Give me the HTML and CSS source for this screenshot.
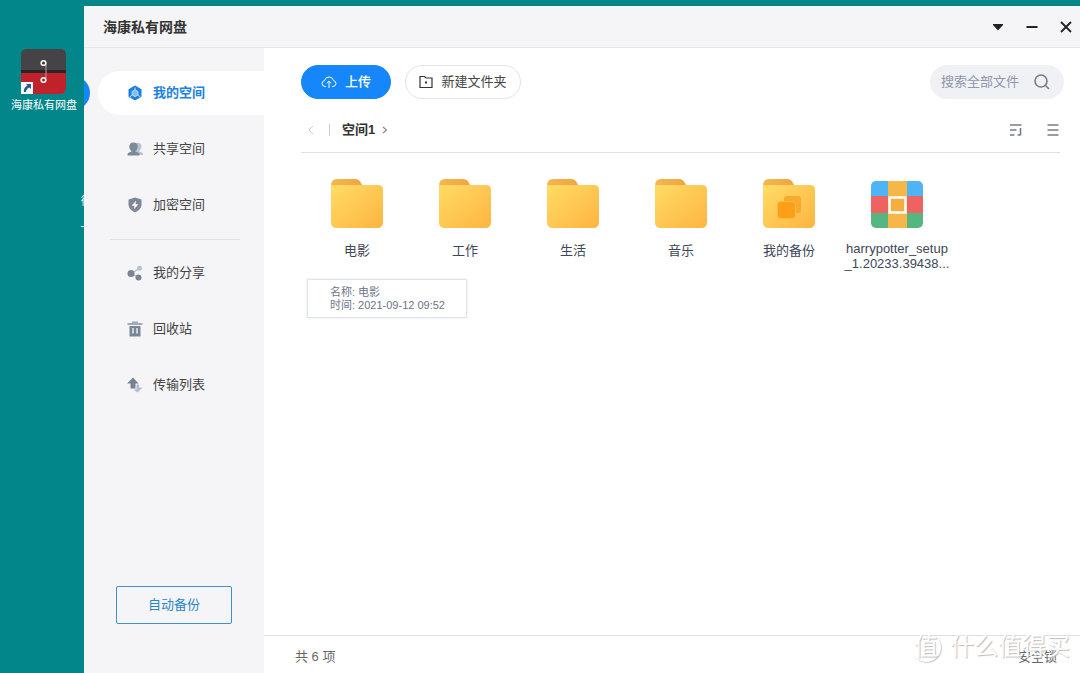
FILE: index.html
```html
<!DOCTYPE html>
<html lang="zh-CN">
<head>
<meta charset="utf-8">
<title>海康私有网盘</title>
<link rel="stylesheet" href="styles.css">
</head>
<body>
<svg class="defs" aria-hidden="true">
  <defs>
    <linearGradient id="front" x1="0" y1="0" x2="1" y2="1"><stop offset="0" stop-color="#ffdb65"/><stop offset="1" stop-color="#fdb540"/></linearGradient>
    <linearGradient id="back" x1="0" y1="0" x2="1" y2="0"><stop offset="0" stop-color="#f3b750"/><stop offset="1" stop-color="#efa63f"/></linearGradient>
    <symbol id="folder" viewBox="0 0 54 52">
      <path fill="url(#back)" d="M1 14V8Q1 1 7 1H25Q29 1 31 5L33 9V14Z"/>
      <path fill="url(#front)" d="M1 7H48Q53 7 53 12V44Q53 50 47 50H7Q1 50 1 44Z"/>
    </symbol>
  </defs>
</svg>
<aside class="desktop">
  <a class="shortcut" href="#">
    <svg width="46" height="46" viewBox="0 0 46 46">
      <rect width="45" height="45" rx="6" fill="#c0222b"/>
      <path fill="#454345" d="M0 23V6Q0 0 6 0H39Q45 0 45 6V23Z"/>
      <path fill="#292426" d="M0 21H45V24H0Z"/>
      <path d="M25 15V29" stroke="#b5a4a5" stroke-width="1"/>
      <circle cx="22.500" cy="14" r="2.300" fill="#333" stroke="#fff" stroke-width="1.600"/>
      <circle cx="22.500" cy="31" r="2.300" fill="#a22" stroke="#fff" stroke-width="1.600"/>
      <path fill="#f5f8fb" d="M0 33H12V45H0Z"/>
      <path fill="#285b94" d="M5 35H10V40L8.500 38.500Q5 40 5 43H3Q2 39 6.500 36.500Z"/>
    </svg>
    <span>海康私有网盘</span>
  </a>
  <span class="hidden-shortcut">微<br>_</span>
</aside>
<div class="window">
  <header class="titlebar">
    <h1>海康私有网盘</h1>
    <div class="window-controls">
      <button aria-label="菜单"><svg width="12" height="12" viewBox="0 0 12 12"><path fill="#222" d="M1 3H11V4L6 9.500 1 4Z"/></svg></button>
      <button aria-label="最小化"><svg width="12" height="12" viewBox="0 0 12 12"><path d="M.5 6H11.500" stroke="#222" stroke-width="2"/></svg></button>
      <button aria-label="关闭"><svg width="12" height="12" viewBox="0 0 12 12"><path d="M1 1 11 11M11 1 1 11" stroke="#222" stroke-width="1.800"/></svg></button>
    </div>
  </header>
  <div class="body">
    <nav class="sidebar">
      <a class="nav-item active" href="#">
        <svg width="16" height="16" viewBox="0 0 16 16"><path fill="#1b7fe0" d="M8 .5 14.500 4.200V11.800L8 15.500 1.500 11.800V4.200Z"/><path d="M8 2.500V5M2.500 12 5 10.300M13.500 12 11 10.300" stroke="#b9dcfb" stroke-width="1"/><path d="M8 4.800 11 6.500V10L8 11.700 5 10V6.500Z" fill="#83bdf3" stroke="#c9e3fb" stroke-width=".8"/></svg>
        <span>我的空间</span></a>
      <a class="nav-item" href="#">
        <svg width="16" height="16" viewBox="0 0 16 16"><path fill="#b9c6d1" d="M9 2Q14 .5 14.500 5 14.500 8 12.500 9.500V10.500L16 12V14H9Z"/><path fill="#7d8a99" d="M6.500 1.500C9.500 1.500 11 3.500 10.700 6 10.500 8 9.700 9 8.700 9.800V10.600L12 12Q12.500 12.500 12.500 14.500H.5Q.5 12.500 1 12L4.300 10.600V9.800C3.300 9 2.500 8 2.300 6 2 3.500 3.500 1.500 6.500 1.500Z"/></svg>
        <span>共享空间</span></a>
      <a class="nav-item" href="#">
        <svg width="16" height="16" viewBox="0 0 16 16"><path fill="#808795" d="M8 .5 14.500 2.500V8Q14 13 8 15.500 2 13 1.500 8V2.500Z"/><path fill="#fff" d="M9 3.800 4.700 8.800H7.500L7 12.200 11.300 7.200H8.500Z"/></svg>
        <span>加密空间</span></a>
      <hr>
      <a class="nav-item" href="#">
        <svg width="16" height="16" viewBox="0 0 16 16"><path d="M12.500 3.500 4 8.500 11.500 12.500" fill="none" stroke="#a5adb8"/><circle cx="4" cy="8.500" r="3.500" fill="#7d8592"/><circle cx="12.500" cy="3.300" r="2.500" fill="#b9c3ce"/><circle cx="11.500" cy="12.500" r="3" fill="#7d8592"/></svg>
        <span>我的分享</span></a>
      <a class="nav-item" href="#">
        <svg width="16" height="16" viewBox="0 0 16 16"><path fill="#9daab8" d="M5 .5H11V2H15.500V4H.5V2H5Z"/><path fill="#788696" d="M2.500 5H13.500V15.500H2.500Z"/><path d="M6 7V12.500M10 7V12.500" stroke="#e6eaee" stroke-width="1.500"/></svg>
        <span>回收站</span></a>
      <a class="nav-item" href="#">
        <svg width="16" height="16" viewBox="0 0 16 16"><path fill="#788191" d="M6 .5 11.500 6.500H8.500V11.500H3.500V6.500H0Z"/><path fill="#b2bdcb" d="M9.500 7.500H12V10.500H15.500L10.500 15.500 6.500 12.500H9.500Z"/></svg>
        <span>传输列表</span></a>
      <button class="backup">自动备份</button>
    </nav>
    <main class="main">
      <div class="toolbar">
        <button class="pill primary"><svg width="16" height="16" viewBox="0 0 16 16" fill="none" stroke="#fff"><path d="M5 12.500H4Q1 12.300 1 9.500 1.200 7 3.500 6.700 4 3 8 3 12 3 12.500 6.700 15 7 15 9.700 14.800 12.300 12 12.500H11M8 14V7M5.700 9.200 8 7 10.300 9.200"/></svg><span>上传</span></button>
        <button class="pill"><svg width="14" height="14" viewBox="0 0 14 14" fill="none" stroke="#333" stroke-width="1.200"><path d="M1 1.500H5.500L7 3H13V12.500H1Z"/><path fill="#333" stroke="none" d="M6 6.500H8V8.500H6Z"/></svg><span>新建文件夹</span></button>
        <label class="search">
          <input type="text" placeholder="搜索全部文件" aria-label="搜索全部文件">
          <svg width="18" height="18" viewBox="0 0 18 18" fill="none" stroke="#777d86" stroke-width="1.600"><circle cx="8" cy="8" r="6"/><path d="M12.300 12.300 16 16"/></svg>
        </label>
      </div>
      <div class="pathbar">
        <button aria-label="后退"><svg width="8" height="10" viewBox="0 0 8 10"><path d="M6 1 2 5 6 9" fill="none" stroke="#ccc"/></svg></button>
        <span class="bar"></span>
        <a href="#">空间1</a>
        <svg width="6" height="8" viewBox="0 0 6 8"><path d="M1 1 4.500 4 1 7" fill="none" stroke="#888" stroke-width="1.200"/></svg>
        <div class="views">
          <button aria-label="排序"><svg width="14" height="14" viewBox="0 0 14 14"><path d="M1 2H12.500M1 7H7.500M1 12H5.500M8.500 12H11M11.500 5V12.500" fill="none" stroke="#777d86" stroke-width="1.600"/></svg></button>
          <button aria-label="列表"><svg width="14" height="14" viewBox="0 0 14 14"><path d="M1.500 2H12.500M1.500 7H12.500M1.500 12H12.500" stroke="#777d86" stroke-width="1.600"/></svg></button>
        </div>
      </div>
      <div class="files">
        <figure class="file"><svg width="54" height="52"><use href="#folder"/></svg><figcaption>电影</figcaption>
          <div class="tooltip">名称: 电影<br>时间: 2021-09-12 09:52</div></figure>
        <figure class="file"><svg width="54" height="52"><use href="#folder"/></svg><figcaption>工作</figcaption></figure>
        <figure class="file"><svg width="54" height="52"><use href="#folder"/></svg><figcaption>生活</figcaption></figure>
        <figure class="file"><svg width="54" height="52"><use href="#folder"/></svg><figcaption>音乐</figcaption></figure>
        <figure class="file"><svg width="54" height="52"><use href="#folder"/><rect x="22" y="18" width="17" height="17" rx="3" fill="#f9a92c"/><rect x="15.500" y="23.500" width="18" height="17" rx="3" fill="#ff9f17" stroke="#fdbd48"/></svg><figcaption>我的备份</figcaption></figure>
        <figure class="file"><svg width="54" height="52" viewBox="0 0 54 52">
          <clipPath id="round"><rect x="1" y="3" width="52" height="47" rx="5"/></clipPath>
          <g clip-path="url(#round)"><path fill="#4db5f5" d="M0 2H54V18H0Z"/><path fill="#ef6262" d="M0 18H54V35H0Z"/><path fill="#55b681" d="M0 35H54V50H0Z"/><path fill="#f6b648" d="M18 2H37V50H18Z"/></g>
          <rect x="19.500" y="19.500" width="16" height="15" fill="#f3ae3d" stroke="#fff" stroke-width="2.500"/></svg><figcaption class="latin">harrypotter_setup<br>_1.20233.39438...</figcaption></figure>
      </div>
      <footer class="status"><span>共 6 项</span><a href="#">安全锁</a></footer>
    </main>
  </div>
</div>
<div class="watermark"><span class="seal">值</span><span>什么值得买</span></div>
</body>
</html>
```
FILE: styles.css
```css
* { box-sizing: border-box; }
body {
  position: relative;
  display: flex;
  min-height: 100vh;
  margin: 0;
  overflow: hidden;
  background: #02868a;
  color: #444;
  font: 13px/20px "Liberation Sans", "Noto Sans CJK SC", sans-serif;
}
a { color: inherit; text-decoration: none; }
button { padding: 0; border: 0; background: none; color: inherit; font: inherit; cursor: pointer; }
svg { display: block; flex: none; }
.defs { position: absolute; width: 0; height: 0; }

.desktop { position: relative; flex: none; width: 84px; padding-top: 49px; overflow: hidden; }
.shortcut {
  display: flex;
  flex-direction: column;
  align-items: center;
  padding-left: 4px;
  color: #fff;
  font-size: 11px;
  white-space: nowrap;
}
.hidden-shortcut { position: absolute; left: 81px; top: 191px; color: #fff; font-size: 11px; }

.window { display: flex; flex: 1; flex-direction: column; min-width: 0; margin-top: 6px; background: #fff; }
.titlebar {
  display: flex;
  align-items: center;
  justify-content: space-between;
  height: 42px;
  padding: 0 8px 0 19px;
  border-bottom: 1px solid #e6e7ea;
  background: #f5f5f7;
}
.titlebar h1 { margin: 0; color: #333; font-size: 14px; font-weight: 700; }
.window-controls { display: flex; gap: 22px; }
.body { display: flex; flex: 1; }

.sidebar {
  position: relative;
  display: flex;
  flex: none;
  flex-direction: column;
  width: 180px;
  padding: 23px 0 49px;
  overflow: hidden;
  background: #f5f5f8;
}
.sidebar::before {
  content: "";
  position: absolute;
  left: -28px;
  top: 28px;
  width: 34px;
  height: 34px;
  border-radius: 50%;
  background: #1687fa;
}
.nav-item {
  display: flex;
  align-items: center;
  gap: 10px;
  height: 44px;
  margin: 0 0 12px 14px;
  padding-left: 29px;
  border-radius: 22px 0 0 22px;
}
.nav-item.active { background: #fff; color: #1b82e2; font-weight: 700; }
.sidebar hr { width: 130px; height: 1px; margin: 0 0 11px 26px; border: 0; background: #dfe0e3; }
.backup {
  width: 116px;
  height: 38px;
  margin: auto 32px 0;
  border: 1px solid #3f90cb;
  border-radius: 2px;
  color: #2a85cc;
}

.main { display: flex; flex: 1; flex-direction: column; min-width: 0; }
.toolbar { display: flex; gap: 14px; padding: 17px 16px 0 37px; }
.pill {
  display: flex;
  align-items: center;
  justify-content: center;
  gap: 8px;
  width: 116px;
  height: 34px;
  border: 1px solid #e3e4e7;
  border-radius: 17px;
}
.pill.primary { width: 90px; border-color: #1687fa; background: #1687fa; color: #fff; font-weight: 500; }
.search {
  display: flex;
  align-items: center;
  width: 134px;
  height: 34px;
  margin-left: auto;
  padding: 0 13px 0 11px;
  border-radius: 17px;
  background: #f0f1f5;
}
.search input { flex: 1; min-width: 0; padding: 0; border: 0; outline: 0; background: none; font: inherit; }
.search input::placeholder { color: #9196aa; opacity: 1; }
.pathbar {
  display: flex;
  align-items: center;
  height: 54px;
  margin: 0 20px 0 37px;
  padding: 8px 0 0 6px;
  border-bottom: 1px solid #dedfe2;
}
.pathbar .bar { width: 1px; height: 12px; margin: 0 12px 0 14px; background: #ccc; }
.pathbar a { margin-right: 7px; color: #333; font-weight: 700; }
.views { display: flex; gap: 23px; margin-left: auto; }

.files { display: flex; flex: 1; flex-wrap: wrap; align-content: flex-start; padding: 25px 0 0 39px; }
.file { position: relative; display: flex; flex-direction: column; align-items: center; width: 108px; margin: 0; color: #3d4655; }
.file figcaption { margin-top: 11px; text-align: center; }
.file figcaption.latin { line-height: 15px; }
.tooltip {
  position: absolute;
  left: 4px;
  top: 101px;
  width: 160px;
  padding: 6px 0 5px 22px;
  border: 1px solid #e0e3ea;
  background: #fff;
  box-shadow: 0 0 3px #e3e5ea;
  color: #6b7488;
  font-size: 11px;
  line-height: 13px;
  white-space: nowrap;
}
.status {
  display: flex;
  align-items: center;
  justify-content: space-between;
  height: 38px;
  padding: 4px 23px 0 31px;
  border-top: 1px solid #dedfe2;
  color: #666;
}

.watermark {
  position: absolute;
  right: 10px;
  bottom: 11px;
  display: flex;
  align-items: center;
  gap: 9px;
  color: #fff;
  font-size: 24px;
  line-height: 30px;
  text-shadow: 1px 1px 1px #bbb;
  pointer-events: none;
}
.seal { width: 30px; height: 30px; border-radius: 50%; box-shadow: 1px 1px 1px #ccc; text-align: center; }
```
